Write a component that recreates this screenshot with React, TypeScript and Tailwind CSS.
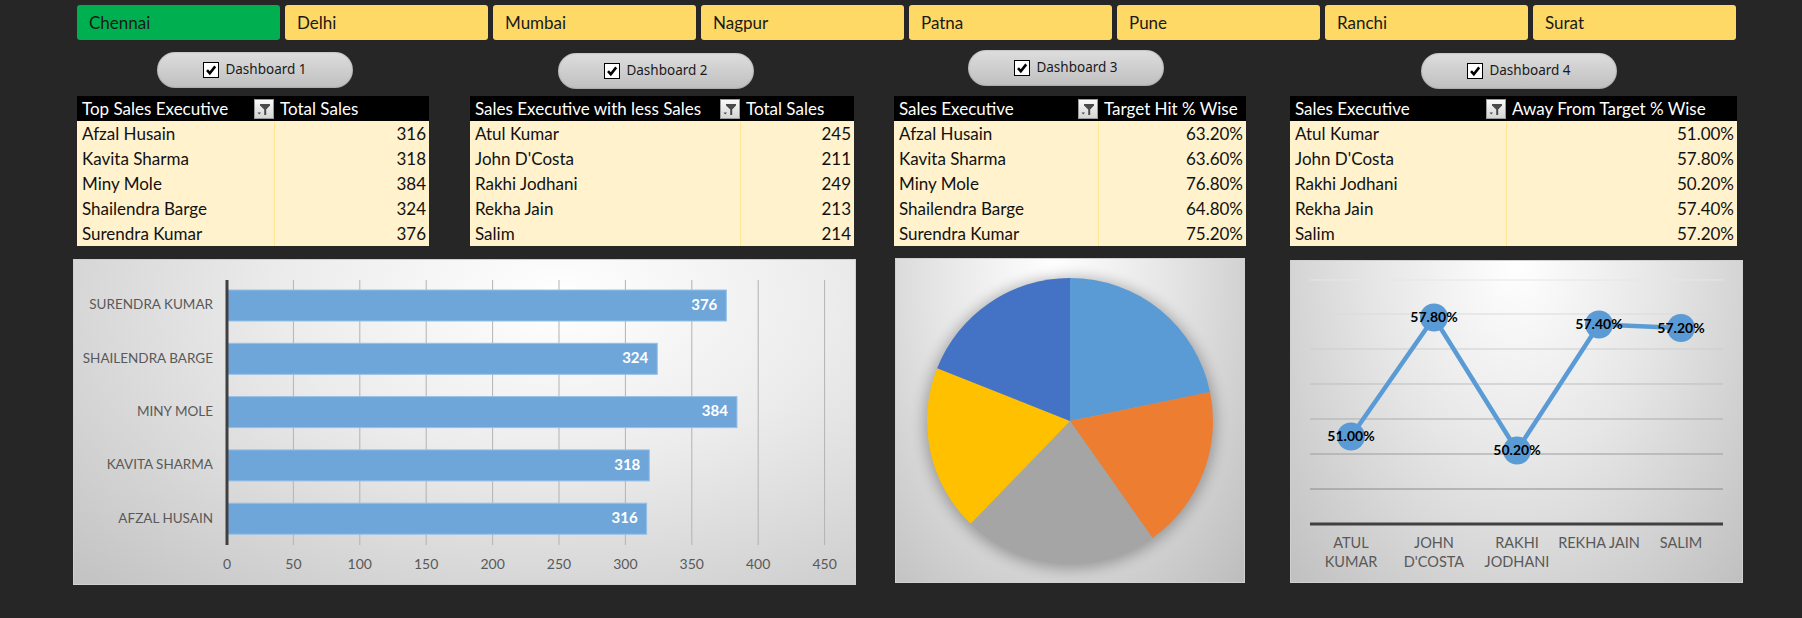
import React from "react";

const cities = ["Chennai", "Delhi", "Mumbai", "Nagpur", "Patna", "Pune", "Ranchi", "Surat"];

type Row = [string, string];

const t1: Row[] = [
  ["Afzal Husain", "316"],
  ["Kavita Sharma", "318"],
  ["Miny Mole", "384"],
  ["Shailendra Barge", "324"],
  ["Surendra Kumar", "376"],
];
const t2: Row[] = [
  ["Atul Kumar", "245"],
  ["John D'Costa", "211"],
  ["Rakhi Jodhani", "249"],
  ["Rekha Jain", "213"],
  ["Salim", "214"],
];
const t3: Row[] = [
  ["Afzal Husain", "63.20%"],
  ["Kavita Sharma", "63.60%"],
  ["Miny Mole", "76.80%"],
  ["Shailendra Barge", "64.80%"],
  ["Surendra Kumar", "75.20%"],
];
const t4: Row[] = [
  ["Atul Kumar", "51.00%"],
  ["John D'Costa", "57.80%"],
  ["Rakhi Jodhani", "50.20%"],
  ["Rekha Jain", "57.40%"],
  ["Salim", "57.20%"],
];

function FilterIcon() {
  return (
    <div className="w-[20px] h-[20px] border border-[#9a9a9a] bg-gradient-to-b from-[#fafafa] to-[#d4d4d4] flex items-center justify-center">
      <svg width="18" height="18" viewBox="0 0 18 18">
        <path d="M5 4 H15 V5.5 L11.2 9.5 V15 H9.2 V9.5 L5 5.5 Z" fill="#4a4a4a" />
        <path d="M2.5 12.5 H6 L4.25 14.5 Z" fill="#4a4a4a" />
      </svg>
    </div>
  );
}

function CheckBox() {
  return (
    <div className="w-[16px] h-[16px] bg-white border border-black flex items-center justify-center">
      <svg width="12" height="12" viewBox="0 0 12 12">
        <path d="M2 6.2 L4.8 9.2 L10.2 2.4" stroke="#000" strokeWidth="2.6" fill="none" />
      </svg>
    </div>
  );
}

function Pill({ label, className }: { label: string; className: string }) {
  return (
    <div
      className={
        "w-[196px] h-[36px] rounded-full bg-gradient-to-b from-[#dedede] to-[#bfbfbf] shadow-[inset_0_0_2px_rgba(0,0,0,0.35)] flex items-center justify-center gap-[6px] " +
        className
      }
    >
      <CheckBox />
      <span className="font-['Noto_Sans',sans-serif] text-[13.5px] text-[#1a1a1a] leading-none">{label}</span>
    </div>
  );
}

function DataTable({
  w1,
  w2,
  h1,
  h2,
  rows,
}: {
  w1: string;
  w2: string;
  h1: string;
  h2: string;
  rows: Row[];
}) {
  return (
    <div className="text-[17px]">
      <div className="flex h-[25px] bg-black text-white leading-[26px]">
        <div className={"flex items-center justify-between pl-[5px] pr-[1px] " + w1}>
          <span>{h1}</span>
          <FilterIcon />
        </div>
        <div className={"pl-[5px] " + w2}>{h2}</div>
      </div>
      {rows.map((r) => (
        <div key={r[0]} className="flex h-[25px] bg-[#FFF2CC] text-[#111] leading-[26px]">
          <div className={"pl-[5px] border-r border-[#FFE699] " + w1}>{r[0]}</div>
          <div className={"text-right pr-[3px] " + w2}>{r[1]}</div>
        </div>
      ))}
    </div>
  );
}

function BarChart() {
  const x0 = 153;
  const k = 1.328;
  const bars: [string, number][] = [
    ["SURENDRA KUMAR", 376],
    ["SHAILENDRA BARGE", 324],
    ["MINY MOLE", 384],
    ["KAVITA SHARMA", 318],
    ["AFZAL HUSAIN", 316],
  ];
  const ticks = [0, 50, 100, 150, 200, 250, 300, 350, 400, 450];
  return (
    <svg width="783" height="326" viewBox="0 0 783 326" className="block">
      {ticks.slice(1).map((t) => (
        <line key={t} x1={x0 + t * k} x2={x0 + t * k} y1={20} y2={285} stroke="#b3b3b3" strokeWidth="1" />
      ))}
      {bars.map(([name, v], i) => {
        const y = 30 + i * 53.3;
        return (
          <g key={name}>
            <rect x={x0} y={y} width={v * k} height={31} fill="#6FA6DA" stroke="#94C0E8" strokeWidth="1" />
            <text
              x={x0 + v * k - 9}
              y={y + 16}
              textAnchor="end"
              dominantBaseline="middle"
              fill="#fff"
              fontWeight="700"
              fontSize="15"
              fontFamily="Lato, sans-serif"
            >
              {v}
            </text>
            <text
              x={139}
              y={y + 16}
              textAnchor="end"
              dominantBaseline="middle"
              fill="#595959"
              fontSize="13.5"
              fontFamily="Lato, sans-serif"
            >
              {name}
            </text>
          </g>
        );
      })}
      <line x1={x0} x2={x0} y1={20} y2={285} stroke="#404040" strokeWidth="3" />
      {ticks.map((t) => (
        <text
          key={t}
          x={x0 + t * k}
          y={305}
          textAnchor="middle"
          dominantBaseline="middle"
          fill="#595959"
          fontSize="14"
          fontFamily="Lato, sans-serif"
        >
          {t}
        </text>
      ))}
    </svg>
  );
}

function PieChart() {
  const cx = 174;
  const cy = 162;
  const r = 143;
  const bounds = [0, 78.3, 144.8, 224, 291.7, 360];
  const colors = ["#5B9BD5", "#ED7D31", "#A5A5A5", "#FFC000", "#4472C4"];
  const pt = (deg: number) => {
    const a = (deg * Math.PI) / 180;
    return [cx + r * Math.sin(a), cy - r * Math.cos(a)];
  };
  return (
    <svg width="350" height="325" viewBox="0 0 350 325" className="block">
      <defs>
        <filter id="pieShadow" x="-20%" y="-20%" width="140%" height="140%">
          <feGaussianBlur stdDeviation="7" />
        </filter>
      </defs>
      <circle cx={cx} cy={cy + 2} r={r + 3} fill="#000" opacity="0.28" filter="url(#pieShadow)" />
      {colors.map((c, i) => {
        const [x1, y1] = pt(bounds[i]);
        const [x2, y2] = pt(bounds[i + 1]);
        return (
          <path
            key={c}
            d={`M${cx} ${cy} L${x1} ${y1} A${r} ${r} 0 0 1 ${x2} ${y2} Z`}
            fill={c}
          />
        );
      })}
    </svg>
  );
}

function LineChart() {
  const vals = [51.0, 57.8, 50.2, 57.4, 57.2];
  const labels = ["51.00%", "57.80%", "50.20%", "57.40%", "57.20%"];
  const xs = [60, 143, 226, 308, 390];
  const yOf = (v: number) => 263 - (v - 46) * 17.5;
  const grid: [number, string][] = [
    [19, "#e6e6e6"],
    [53, "#dadada"],
    [88, "#cdcdcd"],
    [123, "#bdbdbd"],
    [158, "#adadad"],
    [193, "#9c9c9c"],
    [228, "#8a8a8a"],
  ];
  const cats = [["ATUL", "KUMAR"], ["JOHN", "D'COSTA"], ["RAKHI", "JODHANI"], ["REKHA JAIN"], ["SALIM"]];
  const pts = xs.map((x, i) => `${x},${yOf(vals[i])}`).join(" ");
  return (
    <svg width="453" height="323" viewBox="0 0 453 323" className="block">
      {grid.map(([y, c]) => (
        <line key={y} x1={19} x2={432} y1={y} y2={y} stroke={c} strokeWidth="1" />
      ))}
      <line x1={19} x2={432} y1={263} y2={263} stroke="#404040" strokeWidth="3" />
      <polyline points={pts} fill="none" stroke="#5B9BD5" strokeWidth="4.5" strokeLinejoin="round" strokeLinecap="round" />
      {xs.map((x, i) => (
        <circle key={x} cx={x} cy={yOf(vals[i])} r={14} fill="#5B9BD5" />
      ))}
      {xs.map((x, i) => (
        <text
          key={"l" + x}
          x={x}
          y={yOf(vals[i]) + 1}
          textAnchor="middle"
          dominantBaseline="middle"
          fill="#000"
          fontWeight="700"
          fontSize="14"
          fontFamily="Lato, sans-serif"
        >
          {labels[i]}
        </text>
      ))}
      {cats.map((c, i) =>
        c.map((line, j) => (
          <text
            key={line}
            x={xs[i]}
            y={283 + j * 19}
            textAnchor="middle"
            dominantBaseline="middle"
            fill="#595959"
            fontSize="14.5"
            fontFamily="Lato, sans-serif"
          >
            {line}
          </text>
        ))
      )}
    </svg>
  );
}

export default function App() {
  return (
    <div className="w-[1802px] h-[618px] bg-[#262626] overflow-hidden font-['Lato',sans-serif]">
      <div className="flex gap-[5px] pl-[77px] pt-[5px]">
        {cities.map((c, i) => (
          <div
            key={c}
            className={
              "w-[203px] h-[35px] rounded-[3px] pl-[12px] flex items-center text-[17px] text-[#1a1a1a] " +
              (i === 0 ? "bg-[#00B050]" : "bg-[#FFD966]")
            }
          >
            {c}
          </div>
        ))}
      </div>

      <div className="flex items-start pl-[77px] mt-[12px]">
        <div className="w-[352px]">
          <div className="h-[44px] flex flex-col">
            <Pill label="Dashboard 1" className="ml-[80px]" />
          </div>
          <DataTable w1="w-[198px]" w2="w-[154px]" h1="Top Sales Executive" h2="Total Sales" rows={t1} />
        </div>
        <div className="w-[384px] ml-[41px]">
          <div className="h-[44px] flex flex-col">
            <Pill label="Dashboard 2" className="ml-[88px] translate-y-[1px]" />
          </div>
          <DataTable w1="w-[271px]" w2="w-[113px]" h1="Sales Executive with less Sales" h2="Total Sales" rows={t2} />
        </div>
        <div className="w-[352px] ml-[40px]">
          <div className="h-[44px] flex flex-col">
            <Pill label="Dashboard 3" className="ml-[74px] -translate-y-[2px]" />
          </div>
          <DataTable w1="w-[205px]" w2="w-[147px]" h1="Sales Executive" h2="Target Hit % Wise" rows={t3} />
        </div>
        <div className="w-[447px] ml-[44px]">
          <div className="h-[44px] flex flex-col">
            <Pill label="Dashboard 4" className="ml-[131px] translate-y-[1px]" />
          </div>
          <DataTable w1="w-[217px]" w2="w-[230px]" h1="Sales Executive" h2="Away From Target % Wise" rows={t4} />
        </div>
      </div>

      <div className="flex items-start pl-[73px] mt-[13px]">
        <div className="w-[783px] h-[326px] bg-[radial-gradient(ellipse_at_62%_12%,#ffffff_0%,#ececec_40%,#c2c2c2_100%)] border border-[#d0d0d0]">
          <BarChart />
        </div>
        <div className="w-[350px] h-[325px] ml-[39px] -mt-[1px] bg-[radial-gradient(ellipse_at_45%_5%,#ffffff_0%,#e4e4e4_45%,#bdbdbd_100%)] border border-[#d0d0d0]">
          <PieChart />
        </div>
        <div className="w-[453px] h-[323px] ml-[45px] mt-[1px] bg-[radial-gradient(ellipse_at_50%_0%,#ffffff_0%,#e6e6e6_45%,#c0c0c0_100%)] border border-[#d0d0d0]">
          <LineChart />
        </div>
      </div>
    </div>
  );
}
